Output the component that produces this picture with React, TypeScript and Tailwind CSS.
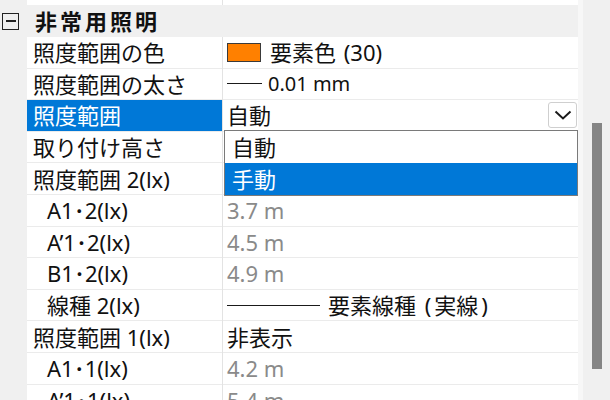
import React from "react";

const FONT = "font-['Noto_Sans','Noto_Sans_CJK_JP',sans-serif]";

type Row = {
  label: string;
  indent?: boolean;
  value?: React.ReactNode;
  selected?: boolean;
};

const Gray = ({ children }: { children: React.ReactNode }) => (
  <span className="text-[#8a8a8a]">{children}</span>
);

const rows: Row[] = [
  {
    label: "照度範囲の色",
    value: (
      <div className="flex items-center">
        <span className="w-[34px] h-[19px] bg-[#ff8000] border border-[#3a3a3a] mr-[9px]" />
        <span>
          要素色 <span className="pl-[2px]">(</span>30<span className="pr-[2px]">)</span>
        </span>
      </div>
    ),
  },
  {
    label: "照度範囲の太さ",
    value: (
      <div className="flex items-center">
        <span className="w-[35px] h-px bg-[#1a1a1a] mr-[6px]" />
        <span className="text-[20px]">0.01 mm</span>
      </div>
    ),
  },
  { label: "照度範囲", selected: true, value: <span>自動</span> },
  { label: "取り付け高さ" },
  { label: "照度範囲 2(lx)" },
  { label: "A1･2(lx)", indent: true, value: <Gray>3.7 m</Gray> },
  { label: "A’1･2(lx)", indent: true, value: <Gray>4.5 m</Gray> },
  { label: "B1･2(lx)", indent: true, value: <Gray>4.9 m</Gray> },
  {
    label: "線種 2(lx)",
    indent: true,
    value: (
      <div className="flex items-center">
        <span className="w-[93px] h-px bg-[#1a1a1a] mr-[8px]" />
        <span>
          要素線種 <span className="px-[3px]">(</span>実線<span className="px-[3px]">)</span>
        </span>
      </div>
    ),
  },
  { label: "照度範囲 1(lx)", value: <span>非表示</span> },
  { label: "A1･1(lx)", indent: true, value: <Gray>4.2 m</Gray> },
  { label: "A’1･1(lx)", indent: true, value: <Gray>5.4 m</Gray> },
];

function PropRow({ row }: { row: Row }) {
  return (
    <div className="flex h-[31.6px] shrink-0">
      <div className="w-[27px] bg-[#f0f0f0]" />
      <div
        className={
          "w-[195px] flex items-center border-b border-[#ebebeb] " +
          (row.indent ? "pl-[20px] " : "pl-[6px] ") +
          (row.selected ? "bg-[#0078d7] text-white" : "bg-white text-[#111]")
        }
      >
        <span className="leading-none whitespace-nowrap">{row.label}</span>
      </div>
      <div className="w-px bg-[#e3e3e3]" />
      <div className="relative flex-1 flex items-center pl-[4px] border-b border-[#ebebeb] bg-white text-[#111]">
        <div className="leading-none whitespace-nowrap flex-1">{row.value}</div>
        {row.selected && (
          <>
            <div className="self-start mt-[2px] mr-[1px] w-[29px] h-[26px] bg-white border border-[#cfcfcf] rounded-[3px] flex items-center justify-center">
              <svg width="18" height="10" viewBox="0 0 18 10">
                <path d="M1.5 1.5 L9 8.5 L16.5 1.5" fill="none" stroke="#1a1a1a" strokeWidth="2" />
              </svg>
            </div>
            <div className="absolute left-[1px] right-0 top-[calc(100%-1px)] z-10 border border-[#7a7a7a] bg-white flex flex-col">
              <div className="h-[32px] flex items-center pl-[7px] text-[#111] leading-none">自動</div>
              <div className="h-[32px] flex items-center pl-[7px] bg-[#0078d7] text-white leading-none">手動</div>
            </div>
          </>
        )}
      </div>
    </div>
  );
}

export default function App() {
  return (
    <div className={"w-[610px] h-[400px] overflow-hidden flex bg-white text-[22px] " + FONT}>
      <div className="w-[578px] flex flex-col">
        <div className="flex h-[5px] shrink-0">
          <div className="w-[27px] bg-[#f0f0f0]" />
          <div className="w-[195px] bg-white" />
          <div className="w-px bg-[#e3e3e3]" />
          <div className="flex-1 bg-white" />
        </div>
        <div className="flex h-[32px] shrink-0 items-center bg-[#f0f0f0]">
          <div className="w-[27px] flex items-center pl-[2px]">
            <div className="w-[17px] h-[17px] border-[1.5px] border-[#222] flex items-center justify-center">
              <div className="w-[10px] h-[1.5px] bg-[#222]" />
            </div>
          </div>
          <span className="pl-[8px] font-bold tracking-[3px] leading-none text-[#111]">非常用照明</span>
        </div>
        {rows.map((r, i) => (
          <PropRow key={i} row={r} />
        ))}
      </div>
      <div className="w-[32px] flex bg-[#f0f0f0]">
        <div className="w-[5px] bg-[#f7f7f7]" />
        <div className="pt-[123px] pl-[9px]">
          <div className="w-[10px] h-[246px] bg-[#858585]" />
        </div>
      </div>
    </div>
  );
}
